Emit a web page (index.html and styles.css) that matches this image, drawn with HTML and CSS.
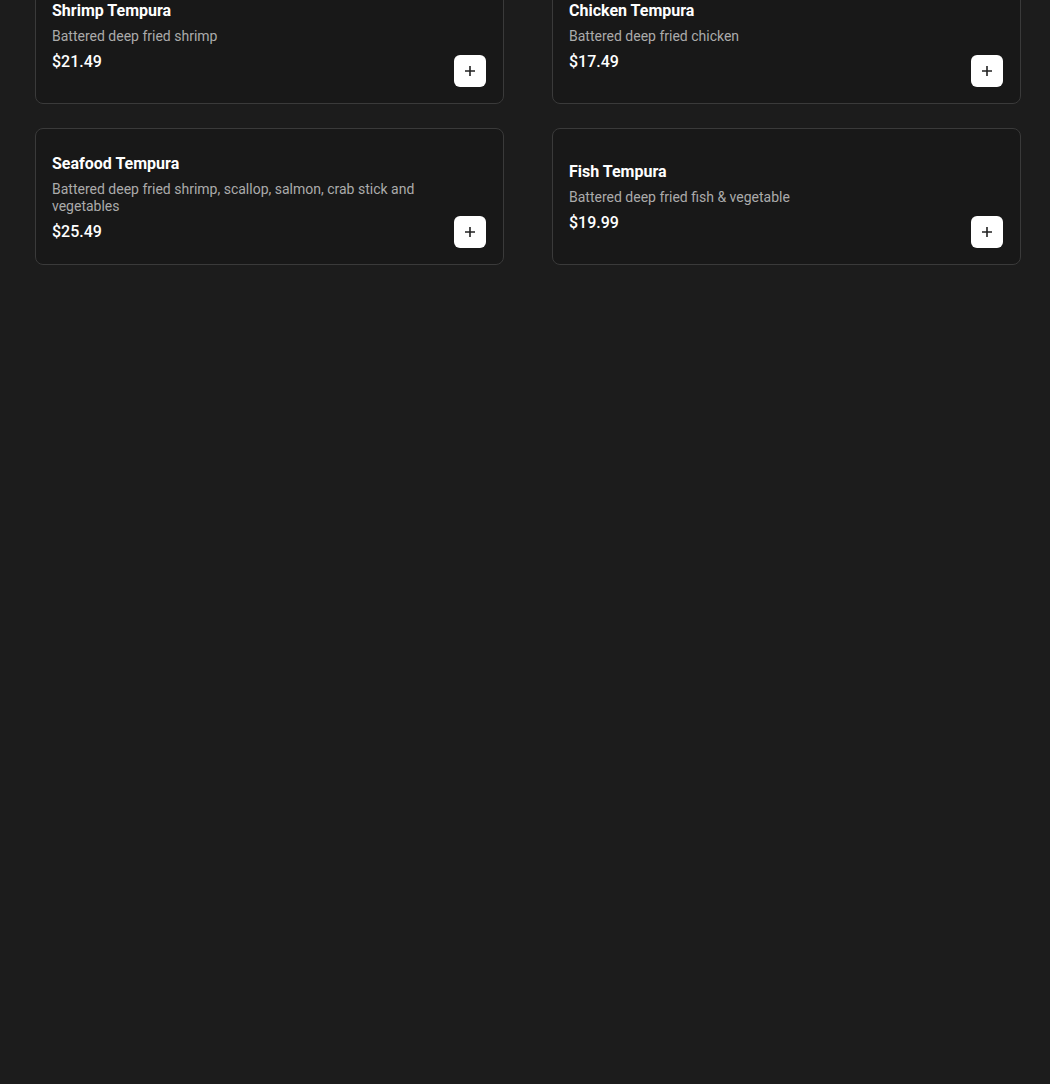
FILE: index.html
```html
<!DOCTYPE html>
<html lang="en">
	<head>
		<meta charset="utf-8">
		<title>Tempura</title>
		<link rel="stylesheet" href="styles.css">
	</head>
	<body>
		<div class="menu-grid">
			<div class="item-card">
				<div class="item-info">
					<h3 class="item-name">Shrimp Tempura</h3>
					<p class="item-desc">Battered deep fried shrimp</p>
					<p class="item-price">$21.49</p>
				</div>
				<button class="add-button" aria-label="Add"><svg width="10" height="10" viewBox="0 0 10 10"><path d="M5 0v10M0 5h10" stroke="#222" stroke-width="1.6"/></svg></button>
			</div>
			<div class="item-card">
				<div class="item-info">
					<h3 class="item-name">Chicken Tempura</h3>
					<p class="item-desc">Battered deep fried chicken</p>
					<p class="item-price">$17.49</p>
				</div>
				<button class="add-button" aria-label="Add"><svg width="10" height="10" viewBox="0 0 10 10"><path d="M5 0v10M0 5h10" stroke="#222" stroke-width="1.6"/></svg></button>
			</div>
			<div class="item-card">
				<div class="item-info">
					<h3 class="item-name">Seafood Tempura</h3>
					<p class="item-desc">Battered deep fried shrimp, scallop, salmon, crab stick and vegetables</p>
					<p class="item-price">$25.49</p>
				</div>
				<button class="add-button" aria-label="Add"><svg width="10" height="10" viewBox="0 0 10 10"><path d="M5 0v10M0 5h10" stroke="#222" stroke-width="1.6"/></svg></button>
			</div>
			<div class="item-card">
				<div class="item-info">
					<h3 class="item-name">Fish Tempura</h3>
					<p class="item-desc">Battered deep fried fish &amp; vegetable</p>
					<p class="item-price">$19.99</p>
				</div>
				<button class="add-button" aria-label="Add"><svg width="10" height="10" viewBox="0 0 10 10"><path d="M5 0v10M0 5h10" stroke="#222" stroke-width="1.6"/></svg></button>
			</div>
		</div>
	</body>
</html>
```
FILE: styles.css
```css
html, body {
	margin: 0;
	padding: 0;
	background-color: #1c1c1c;
	font-family: Roboto, "Liberation Sans", sans-serif;
	color: #fff;
}
.menu-grid {
	display: grid;
	grid-template-columns: 469px 469px;
	column-gap: 48px;
	row-gap: 24px;
	margin: -33px 0 0 35px;
}
.item-card {
	box-sizing: border-box;
	min-height: 137px;
	display: flex;
	align-items: center;
	gap: 16px;
	padding: 16px 17px 16px 16px;
	background-color: #181818;
	border: 1px solid #3a3a3a;
	border-radius: 8px;
}
.item-info {
	flex: 1;
	padding-top: 2px;
}
.item-name {
	margin: 0;
	font-size: 16px;
	font-weight: 700;
	line-height: 24px;
}
.item-desc {
	margin: 5px 0 0 0;
	font-size: 14px;
	line-height: 17px;
	color: #ababab;
}
.item-price {
	margin: 5px 0 0 0;
	font-size: 16px;
	font-weight: 500;
	line-height: 24px;
}
.add-button {
	align-self: flex-end;
	flex: none;
	width: 32px;
	height: 32px;
	padding: 0;
	border: none;
	border-radius: 6px;
	background-color: #fff;
	display: flex;
	align-items: center;
	justify-content: center;
	cursor: pointer;
}
```
